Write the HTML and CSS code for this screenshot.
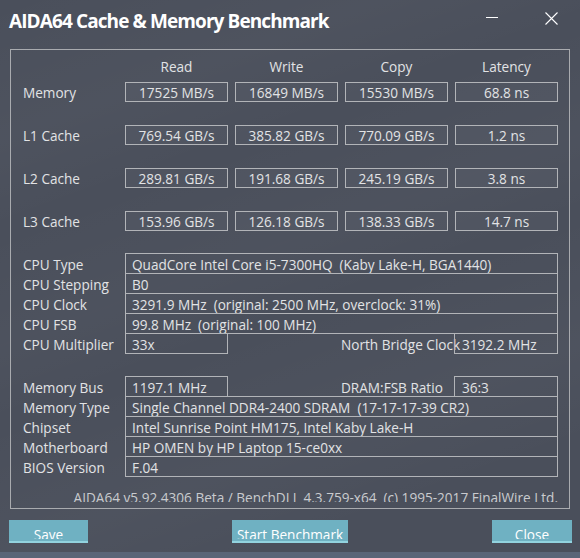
FILE: index.html
```html
<!DOCTYPE html>
<html>
<head>
<meta charset="utf-8">
<link rel="stylesheet" href="styles.css">
</head>
<body>
<div class="window">
  <div class="titlebar">
    <div class="title">AIDA64 Cache &amp; Memory Benchmark</div>
    <div class="controls">
      <svg class="ctl min" width="12" height="12" viewBox="0 0 12 12"><line x1="0" y1="5.5" x2="12" y2="5.5" stroke="#ffffff" stroke-width="1"/></svg>
      <svg class="ctl close" width="13" height="13" viewBox="0 0 13 13"><path d="M0.5 0.5 L12.5 12.5 M12.5 0.5 L0.5 12.5" stroke="#ffffff" stroke-width="1.1" fill="none"/></svg>
    </div>
  </div>

  <div class="panel">
    <div class="bench-head">
      <span></span><span>Read</span><span>Write</span><span>Copy</span><span>Latency</span>
    </div>
    <div class="bench">
      <div class="lbl">Memory</div><div class="val">17525 MB/s</div><div class="val">16849 MB/s</div><div class="val">15530 MB/s</div><div class="val">68.8 ns</div>
      <div class="lbl">L1 Cache</div><div class="val">769.54 GB/s</div><div class="val">385.82 GB/s</div><div class="val">770.09 GB/s</div><div class="val">1.2 ns</div>
      <div class="lbl">L2 Cache</div><div class="val">289.81 GB/s</div><div class="val">191.68 GB/s</div><div class="val">245.19 GB/s</div><div class="val">3.8 ns</div>
      <div class="lbl">L3 Cache</div><div class="val">153.96 GB/s</div><div class="val">126.18 GB/s</div><div class="val">138.33 GB/s</div><div class="val">14.7 ns</div>
    </div>

    <div class="info">
      <div class="row full"><div class="lbl">CPU Type</div><div class="box">QuadCore Intel Core i5-7300HQ&nbsp; (Kaby Lake-H, BGA1440)</div></div>
      <div class="row full"><div class="lbl">CPU Stepping</div><div class="box">B0</div></div>
      <div class="row full"><div class="lbl">CPU Clock</div><div class="box">3291.9 MHz&nbsp; (original: 2500 MHz, overclock: 31%)</div></div>
      <div class="row full"><div class="lbl">CPU FSB</div><div class="box">99.8 MHz&nbsp; (original: 100 MHz)</div></div>
      <div class="row split"><div class="lbl">CPU Multiplier</div><div class="box">33x</div><div></div><div class="lbl2">North Bridge Clock</div><div class="box r">3192.2 MHz</div></div>
    </div>

    <div class="info">
      <div class="row split"><div class="lbl">Memory Bus</div><div class="box">1197.1 MHz</div><div></div><div class="lbl2">DRAM:FSB Ratio</div><div class="box r">36:3</div></div>
      <div class="row full"><div class="lbl">Memory Type</div><div class="box">Single Channel DDR4-2400 SDRAM&nbsp; (17-17-17-39 CR2)</div></div>
      <div class="row full"><div class="lbl">Chipset</div><div class="box">Intel Sunrise Point HM175, Intel Kaby Lake-H</div></div>
      <div class="row full"><div class="lbl">Motherboard</div><div class="box">HP OMEN by HP Laptop 15-ce0xx</div></div>
      <div class="row full"><div class="lbl">BIOS Version</div><div class="box">F.04</div></div>
    </div>

    <div class="footer"><span>AIDA64 v5.92.4306 Beta / BenchDLL 4.3.759-x64&nbsp; (c) 1995-2017 FinalWire Ltd.</span></div>
  </div>

  <div class="buttons">
    <div class="btn save"><span>Save</span></div>
    <div class="btn start"><span>Start Benchmark</span></div>
    <div class="btn closebtn"><span>Close</span></div>
  </div>
  <div class="strip"></div>
</div>
</body>
</html>
```

FILE: styles.css
```css
* { box-sizing: border-box; }
html, body { margin: 0; padding: 0; }
body {
  background: #4b505c;
  font-family: "Open Sans", "Noto Sans", "Liberation Sans", sans-serif;
  font-size: 13.6px;
  color: #e2e3e5;
}
.window {
  width: 580px;
  height: 558px;
  overflow: hidden;
  background:
    linear-gradient(160deg, rgba(255,255,255,0) 0%, rgba(255,255,255,0.025) 18%, rgba(255,255,255,0) 30%, rgba(255,255,255,0.02) 45%, rgba(255,255,255,0) 55%, rgba(255,255,255,0.025) 72%, rgba(255,255,255,0) 85%),
    #4a4f5b;
}
.titlebar {
  height: 49px;
  display: flex;
  align-items: flex-start;
  justify-content: space-between;
}
.title {
  font-weight: 700;
  font-size: 19px;
  line-height: 26px;
  color: #ffffff;
  padding: 8px 0 0 9px;
  letter-spacing: -0.9px;
}
.controls {
  display: flex;
  align-items: flex-start;
  padding-top: 12px;
  padding-right: 22px;
}
.ctl { display: block; }
.min { margin-right: 47px; margin-top: -0.5px; }
.close { margin-top: 0; }

.panel {
  margin-left: 10px;
  width: 560px;
  height: 460px;
  border: 1px solid #a9abaf;
  padding: 7px 0 0 12px;
}
.bench-head {
  display: grid;
  grid-template-columns: 95px repeat(4, 103px);
  column-gap: 7px;
  height: 18px;
  line-height: 18px;
  padding-top: 1px;
  text-align: center;
}
.bench {
  margin-top: 7px;
  display: grid;
  grid-template-columns: 95px repeat(4, 103px);
  grid-auto-rows: 20px;
  column-gap: 7px;
  row-gap: 23px;
}
.lbl { line-height: 18px; padding-top: 2px; white-space: nowrap; }
.val {
  border: 1px solid #b2b4b8;
  background: rgba(255,255,255,0.03);
  text-align: center;
  line-height: 18px;
  padding-top: 1px;
  white-space: nowrap;
}
.info { margin-top: 22px; }
.row {
  display: grid;
  height: 21px;
  margin-bottom: -1px;
}
.row:last-child { margin-bottom: 0; }
.row.full { grid-template-columns: 102px 433px; }
.row.split { grid-template-columns: 102px 103px 113px 113px 104px; }
.row .lbl { padding-top: 3px; }
.lbl2 { line-height: 18px; padding-top: 3px; white-space: nowrap; }
.box {
  border: 1px solid #b2b4b8;
  line-height: 18px;
  padding: 2px 0 0 6px;
  white-space: nowrap;
  overflow: hidden;
}
.box.r { padding-left: 7px; }

.footer {
  margin-top: 12px;
  height: 13px;
  overflow: hidden;
  line-height: 18px;
  text-align: right;
  padding-right: 11px;
  color: #c9cbce;
  white-space: nowrap;
}

.buttons {
  margin-top: 11px;
  display: flex;
  justify-content: space-between;
  padding: 0 8px 0 9px;
}
.btn {
  height: 23px;
  background: #6fb1c2;
  border-bottom: 2px solid #92d3df;
  padding-top: 6px;
  color: #ffffff;
  text-align: center;
}
.btn span {
  display: block;
  height: 13px;
  overflow: hidden;
  line-height: 18px;
}
.save { width: 79px; }
.start { width: 116px; }
.closebtn { width: 80px; }
.strip {
  margin-top: 9px;
  height: 6px;
  background: #5a6577;
}
```
